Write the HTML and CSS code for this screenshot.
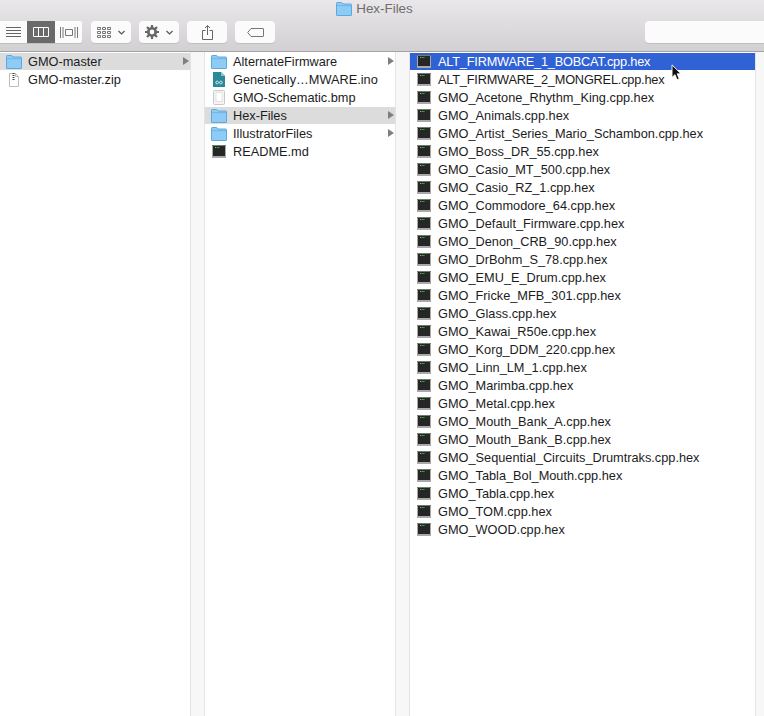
FILE: index.html
```html
<!DOCTYPE html>
<html lang="en">
<head>
  <meta charset="UTF-8">
  <title>Hex-Files</title>
  <link rel="stylesheet" href="styles.css">
</head>
<body>
  <svg class="defs" width="0" height="0">
    <symbol id="folder" viewBox="0 0 16 14">
      <path d="M.5 13V1.2C.5.8.8.5 1.2.5h4.2c.4 0 .6.2.8.5l.8 1h7.800c.4 0 .7.3.7.7V13c0 .3-.2.5-.5.5H1c-.3 0-.5-.2-.5-.5z" fill="#8ecbf5" stroke="#5aa9e0"/>
      <path d="M1 3.600h14" stroke="#6db8ea" fill="none"/>
    </symbol>
    <symbol id="term" viewBox="0 0 14 13">
      <rect width="14" height="13" fill="#a9a9a9"/>
      <rect x="1" y="0" width="12" height="11" fill="#262626"/>
      <rect x="0" y="0" width="14" height="1" fill="#777"/>
      <path d="M3 2.500h1M4.700 2.500h1M6.400 2.500h1" stroke="#3fdc4a" fill="none"/>
    </symbol>
  </svg>

  <header class="toolbar">
    <div class="title">
      <svg class="icon-folder"><use href="#folder"/></svg>
      <span>Hex-Files</span>
    </div>
    <div class="tools">
      <div class="segmented">
        <button class="seg">
          <svg width="15" height="10" viewBox="0 0 15 10"><path d="M0 .5h15M0 3.500h15M0 6.500h15M0 9.500h15" stroke="#666" fill="none"/></svg>
        </button>
        <button class="seg active">
          <svg width="16" height="10" viewBox="0 0 16 10"><path d="M.5.5h15v9H.5zM5.500.5v9M10.500.5v9" stroke="#fff" fill="none"/></svg>
        </button>
        <button class="seg">
          <svg width="18" height="11" viewBox="0 0 18 11"><path d="M5.500 2.500h7v6h-7zM.5 0v11M3 0v11M15 0v11M17.500 0v11" stroke="#777" fill="none"/></svg>
        </button>
      </div>
      <button class="btn btn-arrange">
        <svg width="14" height="11" viewBox="0 0 14 11"><path d="M.5.5h3v2h-3zM5.500.5h3v2h-3zM10.500.5h3v2h-3zM.5 4.500h3v2h-3zM5.500 4.500h3v2h-3zM10.500 4.500h3v2h-3zM.5 8.500h3v2h-3zM5.500 8.500h3v2h-3zM10.500 8.500h3v2h-3z" stroke="#777" fill="none"/></svg>
        <svg width="7" height="5" viewBox="0 0 7 5"><path d="M.5 1l3 3 3-3" stroke="#555" stroke-width="1.200" fill="none"/></svg>
      </button>
      <button class="btn btn-action">
        <svg width="14" height="14" viewBox="0 0 14 14"><circle cx="7" cy="7" r="3.700" fill="none" stroke="#666" stroke-width="2.600"/><path d="M7 0v3M7 11v3M0 7h3M11 7h3M2 2l2.200 2.200M9.800 9.800L12 12M12 2L9.800 4.200M4.200 9.800L2 12" stroke="#666" stroke-width="2.200" fill="none"/></svg>
        <svg width="7" height="5" viewBox="0 0 7 5"><path d="M.5 1l3 3 3-3" stroke="#555" stroke-width="1.200" fill="none"/></svg>
      </button>
      <button class="btn btn-share">
        <svg width="11" height="15" viewBox="0 0 11 15"><path d="M3.500 5.500H.5v9h10v-9h-3M5.500 10V.8M3 3l2.500-2.500L8 3" stroke="#666" fill="none"/></svg>
      </button>
      <button class="btn btn-tag">
        <svg width="17" height="9" viewBox="0 0 17 9"><path d="M4 .5h12c.3 0 .5.200.5.500v7c0 .3-.2.500-.5.500H4L.7 4.500z" stroke="#777" fill="none"/></svg>
      </button>
      <div class="search"></div>
    </div>
  </header>

  <main class="browser">
    <section class="col col-1">
      <div class="row open"><svg class="icon-folder"><use href="#folder"/></svg><span>GMO-master</span><i class="arrow"></i></div>
      <div class="row">
        <svg class="icon-doc" viewBox="0 0 12 15"><path d="M1.500 1.500h6l3 3v10h-9z" fill="#fff" stroke="#bbb"/><path d="M7.500 1.500v3h3" fill="none" stroke="#bbb"/><path d="M5.500 1v7" stroke="#444" stroke-width="2" stroke-dasharray="1 1"/></svg>
        <span>GMO-master.zip</span>
      </div>
    </section>

    <section class="col col-2">
      <div class="row"><svg class="icon-folder"><use href="#folder"/></svg><span>AlternateFirmware</span><i class="arrow"></i></div>
      <div class="row">
        <svg class="icon-doc" viewBox="0 0 12 15"><path d="M0 0h8l4 4v11H0z" fill="#2b8a97"/><path d="M8 0l4 4H8z" fill="#8cc4cc"/><path d="M6 10.500c-.8-1-1.400-1.400-2-1.400-.7 0-1.200.6-1.200 1.400s.5 1.400 1.200 1.400c.6 0 1.200-.4 2-1.400zm0 0c.8-1 1.400-1.400 2-1.400.7 0 1.200.6 1.200 1.400s-.5 1.400-1.200 1.400c-.6 0-1.200-.4-2-1.400z" fill="none" stroke="#fff" stroke-width=".8"/></svg>
        <span>Genetically…MWARE.ino</span>
      </div>
      <div class="row">
        <svg class="icon-doc" viewBox="0 0 12 15"><rect x=".5" y=".5" width="11" height="14" rx="1" fill="#f4f4f4" stroke="#c8c8c8"/><path d="M3 2.500h6v9H3z" fill="#fff" stroke="#e2e2e2"/></svg>
        <span>GMO-Schematic.bmp</span>
      </div>
      <div class="row open"><svg class="icon-folder"><use href="#folder"/></svg><span>Hex-Files</span><i class="arrow"></i></div>
      <div class="row"><svg class="icon-folder"><use href="#folder"/></svg><span>IllustratorFiles</span><i class="arrow"></i></div>
      <div class="row"><svg class="icon-term"><use href="#term"/></svg><span>README.md</span></div>
    </section>

    <section class="col col-3">
      <div class="row selected"><svg class="icon-term"><use href="#term"/></svg><span class="caps">ALT_FIRMWARE_1_BOBCAT.cpp.hex</span></div>
      <div class="row"><svg class="icon-term"><use href="#term"/></svg><span class="caps">ALT_FIRMWARE_2_MONGREL.cpp.hex</span></div>
      <div class="row"><svg class="icon-term"><use href="#term"/></svg><span>GMO_Acetone_Rhythm_King.cpp.hex</span></div>
      <div class="row"><svg class="icon-term"><use href="#term"/></svg><span>GMO_Animals.cpp.hex</span></div>
      <div class="row"><svg class="icon-term"><use href="#term"/></svg><span>GMO_Artist_Series_Mario_Schambon.cpp.hex</span></div>
      <div class="row"><svg class="icon-term"><use href="#term"/></svg><span>GMO_Boss_DR_55.cpp.hex</span></div>
      <div class="row"><svg class="icon-term"><use href="#term"/></svg><span>GMO_Casio_MT_500.cpp.hex</span></div>
      <div class="row"><svg class="icon-term"><use href="#term"/></svg><span>GMO_Casio_RZ_1.cpp.hex</span></div>
      <div class="row"><svg class="icon-term"><use href="#term"/></svg><span>GMO_Commodore_64.cpp.hex</span></div>
      <div class="row"><svg class="icon-term"><use href="#term"/></svg><span>GMO_Default_Firmware.cpp.hex</span></div>
      <div class="row"><svg class="icon-term"><use href="#term"/></svg><span>GMO_Denon_CRB_90.cpp.hex</span></div>
      <div class="row"><svg class="icon-term"><use href="#term"/></svg><span>GMO_DrBohm_S_78.cpp.hex</span></div>
      <div class="row"><svg class="icon-term"><use href="#term"/></svg><span>GMO_EMU_E_Drum.cpp.hex</span></div>
      <div class="row"><svg class="icon-term"><use href="#term"/></svg><span>GMO_Fricke_MFB_301.cpp.hex</span></div>
      <div class="row"><svg class="icon-term"><use href="#term"/></svg><span>GMO_Glass.cpp.hex</span></div>
      <div class="row"><svg class="icon-term"><use href="#term"/></svg><span>GMO_Kawai_R50e.cpp.hex</span></div>
      <div class="row"><svg class="icon-term"><use href="#term"/></svg><span>GMO_Korg_DDM_220.cpp.hex</span></div>
      <div class="row"><svg class="icon-term"><use href="#term"/></svg><span>GMO_Linn_LM_1.cpp.hex</span></div>
      <div class="row"><svg class="icon-term"><use href="#term"/></svg><span>GMO_Marimba.cpp.hex</span></div>
      <div class="row"><svg class="icon-term"><use href="#term"/></svg><span>GMO_Metal.cpp.hex</span></div>
      <div class="row"><svg class="icon-term"><use href="#term"/></svg><span>GMO_Mouth_Bank_A.cpp.hex</span></div>
      <div class="row"><svg class="icon-term"><use href="#term"/></svg><span>GMO_Mouth_Bank_B.cpp.hex</span></div>
      <div class="row"><svg class="icon-term"><use href="#term"/></svg><span>GMO_Sequential_Circuits_Drumtraks.cpp.hex</span></div>
      <div class="row"><svg class="icon-term"><use href="#term"/></svg><span>GMO_Tabla_Bol_Mouth.cpp.hex</span></div>
      <div class="row"><svg class="icon-term"><use href="#term"/></svg><span>GMO_Tabla.cpp.hex</span></div>
      <div class="row"><svg class="icon-term"><use href="#term"/></svg><span>GMO_TOM.cpp.hex</span></div>
      <div class="row"><svg class="icon-term"><use href="#term"/></svg><span>GMO_WOOD.cpp.hex</span></div>
    </section>
  </main>

  <svg class="cursor" width="11" height="17" viewBox="0 0 12 19">
    <path d="M1 1v14l3.300-3.100 2.300 5.600 2.500-1-2.300-5.500H11z" fill="#111" stroke="#fff"/>
  </svg>
</body>
</html>
```

FILE: styles.css
```css
/* Base styling */
html, body {
  height: 100%;
}

body {
  margin: 0;
  overflow: hidden;
  display: flex;
  flex-direction: column;
  position: relative;
  background: #f6f6f6;
  color: #1c1c1c;
  font-family: "Liberation Sans", Arial, sans-serif;
  font-size: 12.75px;
}

.defs {
  position: absolute;
}

/* Toolbar */
.toolbar {
  height: 52px;
  flex: none;
  box-sizing: border-box;
  padding-top: 1px;
  background: linear-gradient(#e9e7e9, #d2d0d2);
  border-bottom: 1px solid #a3a3a3;
}

.title {
  height: 15px;
  display: flex;
  justify-content: center;
  align-items: center;
  gap: 4px;
  padding-right: 15px;
  color: #6e6e6e;
  font-size: 13.4px;
}

.tools {
  display: flex;
  margin-top: 5px;
  height: 22px;
}

button {
  border: 0;
  padding: 0;
  background: #fbfbfb;
  display: flex;
  align-items: center;
  justify-content: center;
  box-shadow: 0 1px 0 #c0bec0;
}

.segmented {
  display: flex;
  width: 83px;
  border-radius: 0 4px 4px 0;
  overflow: hidden;
  margin-right: 8px;
  box-shadow: 0 1px 0 #c0bec0;
}

.seg {
  width: 27px;
  flex: none;
  box-shadow: none;
}

.seg.active {
  width: 28px;
  background: #6a6a6a;
}

.btn {
  border-radius: 4px;
  width: 40px;
  margin-right: 8px;
}

.btn-arrange,
.btn-action {
  gap: 7px;
}

.search {
  width: 119px;
  background: #fbfbfb;
  border-radius: 4px 0 0 4px;
  margin-left: auto;
  box-shadow: 0 1px 0 #c0bec0;
}

/* Column browser */
.browser {
  flex: 1;
  display: flex;
  min-height: 0;
  background: #f7f7f7;
}

.col {
  background: #fff;
  padding-top: 1px;
}

.col-1 {
  width: 190px;
  border-right: 1px solid #e4e4e4;
}

.col-2 {
  width: 190px;
  margin-left: 13px;
  border-left: 1px solid #e4e4e4;
  border-right: 1px solid #e4e4e4;
}

.col-3 {
  width: 345px;
  margin-left: 13px;
  border-left: 1px solid #e4e4e4;
  border-right: 1px solid #e4e4e4;
}

.row {
  height: 17px;
  margin-bottom: 1px;
  padding-left: 6px;
  display: flex;
  align-items: center;
  position: relative;
  white-space: nowrap;
}

.open {
  background: #dcdcdc;
}

.selected {
  background: #3062d6;
  color: #fff;
}

.row span {
  margin-left: 6px;
}

.row .icon-term + span {
  margin-left: 7px;
}

/* All-caps names run a little tight in the original */
.row .caps {
  letter-spacing: -0.2px;
}

/* Icons */
.icon-folder {
  width: 16px;
  height: 14px;
  flex: none;
}

.icon-term {
  width: 14px;
  height: 13px;
  flex: none;
  margin-left: 1px;
}

.icon-doc {
  width: 12px;
  height: 15px;
  flex: none;
  margin: 0 2px;
}

.arrow {
  position: absolute;
  right: 1px;
  top: 4px;
  border-left: 6px solid #7f7f7f;
  border-top: 4px solid transparent;
  border-bottom: 4px solid transparent;
}

/* Mouse pointer sits over the list */
.cursor {
  position: absolute;
  left: 671px;
  top: 64px;
}
```
